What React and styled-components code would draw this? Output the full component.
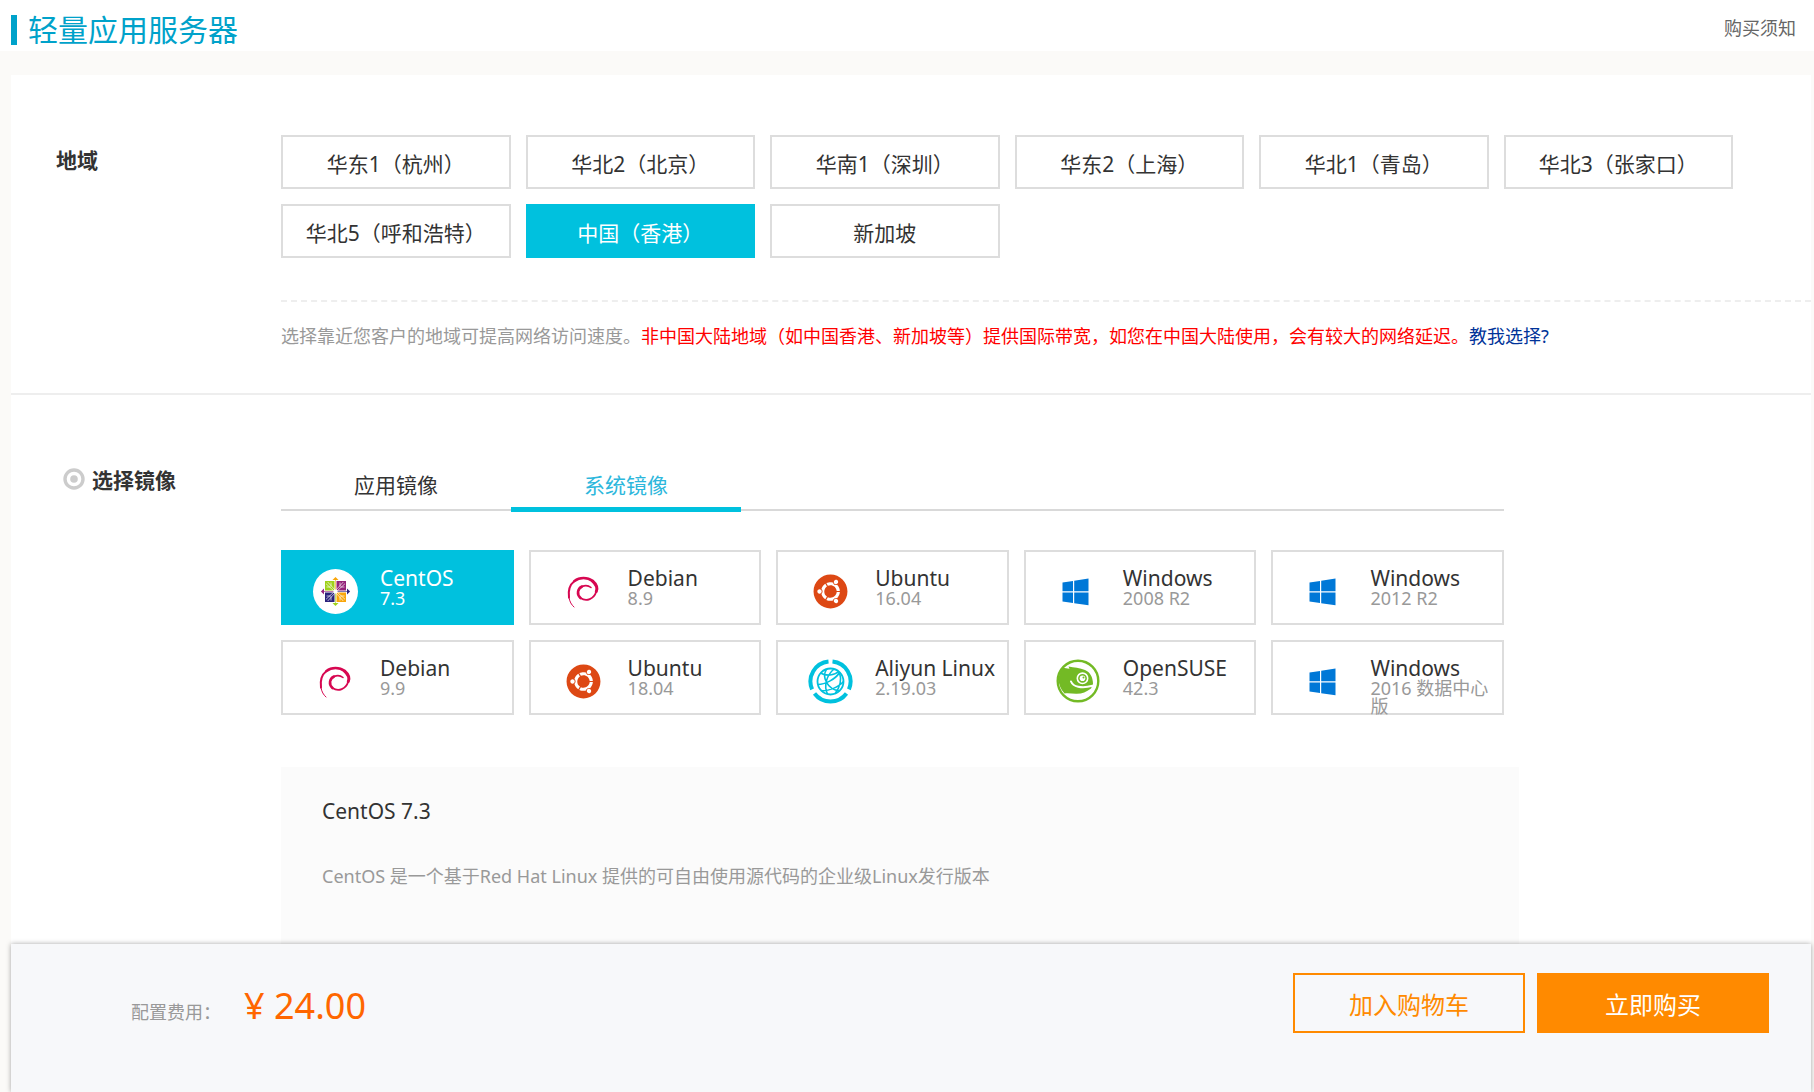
import React, { useState } from 'react';
import styled, { createGlobalStyle } from 'styled-components';
import { FaUbuntu } from 'react-icons/fa';

const GlobalStyle = createGlobalStyle`
    * {
        box-sizing: border-box;
    }
    body {
        margin: 0;
        background: #fbfaf8;
        color: #333;
        font-family: 'Noto Sans', 'Noto Sans CJK SC', sans-serif;
        font-size: 18px;
    }
    button {
        font-family: inherit;
        cursor: pointer;
    }
`;

const Page = styled.div`
    display: flex;
    flex-direction: column;
    min-height: 100vh;
`;
const Header = styled.header`
    display: flex;
    align-items: flex-start;
    justify-content: space-between;
    height: 51px;
    padding: 15px 18px 0 11px;
    background: #fff;
`;
const Title = styled.h1`
    margin: 0;
    padding-left: 11px;
    border-left: 6px solid #00a2ca;
    color: #00a2ca;
    font-size: 30px;
    font-weight: 400;
    line-height: 30px;
`;
const NoticeLink = styled.a`
    color: #666;
    line-height: 26px;
    text-decoration: none;
`;
const Main = styled.main`
    flex: 1;
    display: flex;
    flex-direction: column;
    margin: 24px 3px 0 11px;
    background: #fff;
`;
const Section = styled.section`
    display: flex;
    flex: ${(props) => (props.$grow ? 1 : 'none')};
    padding-top: 60px;
    border-bottom: ${(props) => (props.$grow ? 'none' : '2px solid #eee')};
`;
const Label = styled.h2`
    display: flex;
    align-items: center;
    gap: 7px;
    flex: none;
    width: 270px;
    height: 48px;
    margin: 0;
    padding-left: ${(props) => (props.$marked ? '52px' : '45px')};
    font-size: 21px;
    font-weight: 700;
`;
const Content = styled.div`
    flex: 1;
    min-width: 0;
    display: flex;
    flex-direction: column;
`;
const RegionGrid = styled.div`
    display: grid;
    grid-template-columns: repeat(6, 1fr);
    gap: 15px;
    padding-right: 78px;
`;
const RegionButton = styled.button`
    height: 54px;
    padding: 2px 0 0;
    border: 2px solid ${(props) => (props.$active ? '#00c1de' : '#ddd')};
    background: ${(props) => (props.$active ? '#00c1de' : '#fff')};
    color: ${(props) => (props.$active ? '#fff' : '#333')};
    font-size: 21px;
    white-space: nowrap;
`;
const Tip = styled.p`
    margin: 42px 0 0;
    padding: 20px 0 43px;
    border-top: 2px dashed #eee;
    color: #999;
    line-height: 28px;
`;
const Warning = styled.span`
    color: #f00;
`;
const TipLink = styled.a`
    color: #039;
    text-decoration: none;
`;
const Images = styled.div`
    padding-right: 307px;
`;
const Tabs = styled.div`
    display: flex;
    height: 56px;
    border-bottom: 2px solid #d9d9d9;
`;
const Tab = styled.button`
    width: 230px;
    height: 57px;
    padding: 6px 0 0;
    border: 0;
    border-bottom: 5px solid ${(props) => (props.$active ? '#00c1de' : 'transparent')};
    background: none;
    color: ${(props) => (props.$active ? '#2db7dc' : '#333')};
    font-size: 21px;
`;
const ImageGrid = styled.div`
    display: grid;
    grid-template-columns: repeat(5, 1fr);
    gap: 15px;
    margin-top: 39px;
`;
const ImageCard = styled.button`
    display: flex;
    align-items: flex-start;
    gap: 22px;
    height: 75px;
    padding: 16px 0 0 30px;
    border: 2px solid ${(props) => (props.$active ? '#00c1de' : '#ddd')};
    background: ${(props) => (props.$active ? '#00c1de' : '#fff')};
    color: ${(props) => (props.$active ? '#fff' : '#333')};
    text-align: left;
`;
const Logo = styled.span`
    display: flex;
    align-items: center;
    justify-content: center;
    flex: none;
    width: 45px;
    height: 45px;
    margin-top: 1px;
    border-radius: 50%;
    background: #fff;
`;
const ImageText = styled.span`
    min-width: 0;
`;
const ImageName = styled.span`
    display: block;
    font-size: 21px;
    line-height: 21px;
    white-space: nowrap;
`;
const ImageVersion = styled.span`
    display: block;
    color: ${(props) => (props.$active ? '#fff' : '#999')};
    font-size: 18px;
    line-height: 18px;
`;
const Detail = styled.div`
    flex: 1;
    margin: 52px 292px 0 0;
    padding: 30px 41px;
    background: #fbfbfb;
`;
const DetailTitle = styled.h3`
    margin: 0;
    font-size: 21px;
    font-weight: 400;
    line-height: 28px;
`;
const DetailText = styled.p`
    margin: 37px 0 0;
    color: #999;
    line-height: 28px;
`;
const Footer = styled.footer`
    position: sticky;
    bottom: 0;
    display: flex;
    justify-content: space-between;
    height: 148px;
    margin: 0 3px 0 11px;
    padding: 29px 42px 0 120px;
    background: #f7f8fa;
    box-shadow: 0 0 5px rgba(0, 0, 0, 0.35);
`;
const Cost = styled.div`
    display: flex;
    align-items: baseline;
    gap: 23px;
    padding-top: 8px;
    color: #999;
`;
const Price = styled.strong`
    color: #f60;
    font-size: 36px;
    font-weight: 400;
`;
const Actions = styled.div`
    display: flex;
    gap: 12px;
`;
const ActionButton = styled.button`
    width: 232px;
    height: 60px;
    border: 2px solid #ff8a00;
    background: ${(props) => (props.$primary ? '#ff8a00' : 'transparent')};
    color: ${(props) => (props.$primary ? '#fff' : '#ff8a00')};
    font-size: 24px;
`;

const TargetIcon = () => (
    <svg width="22" height="22" viewBox="0 0 22 22" aria-hidden="true">
        <circle cx="11" cy="11" r="9" fill="none" stroke="#ccc" strokeWidth="3.4" />
        <circle cx="11" cy="11" r="3.8" fill="#ccc" />
    </svg>
);

// one quarter of the CentOS mark, turned four times around the centre
const Quarter = ({ color, tip, angle }) => (
    <g transform={`rotate(${angle})`}>
        <rect x="-10.5" y="-10.5" width="9.5" height="9.5" fill={color} />
        <path d="M-3 -11.5 0 -14.6 3 -11.5Z" fill={tip} />
        <path d="M0 -12V0" stroke={tip} strokeOpacity="0.6" strokeWidth="1" />
        <path
            d="M-9.5 -7.8 -1 0M-7.8 -9.5 0 -1M-9 -4.5H-5M-4.5 -9V-5"
            stroke="#fff"
            strokeOpacity="0.65"
            strokeWidth="1"
        />
    </g>
);

const CentosLogo = () => (
    <svg width="45" height="45" viewBox="-22.5 -22.5 45 45">
        <Quarter color="#9fd11a" tip="#f9a60a" angle={0} />
        <Quarter color="#93237b" tip="#2b237c" angle={90} />
        <Quarter color="#f9a60a" tip="#9fd11a" angle={180} />
        <Quarter color="#2b237c" tip="#93237b" angle={270} />
        <circle r="2" fill="#fff" />
    </svg>
);

const DebianLogo = () => (
    <svg width="45" height="45" viewBox="-22.5 -22.5 45 45" fill="none" stroke="#d70751" strokeLinecap="round">
        <path strokeWidth="1" d="M-9.5 15.500C-12 13.500 -14 10 -14.500 6" />
        <path strokeWidth="2" d="M-14.500 6C-15.500 -1 -13.500 -7 -9 -10.500" />
        <path strokeWidth="2.6" d="M-9 -10.500C-4 -14.500 4 -14.500 9 -10.500" />
        <path strokeWidth="3" d="M9 -10.500C13 -7 14 -3 12.800 0" />
        <path strokeWidth="1.800" d="M12.800 0C10.500 7.500 3 10.500 -3 6.500" />
        <path strokeWidth="2.600" d="M-3 6.500C-7 3 -6 -3 -1.500 -5" />
        <path strokeWidth="1.500" d="M-1.500 -5C2 -6.500 5 -6 7.500 -4" />
    </svg>
);

const WindowsLogo = () => (
    <svg width="45" height="45" viewBox="0 0 45 45" fill="#0078d7">
        <path d="M6.500 13.500 17 12V22.300H6.500ZM18.200 11.800 32.500 9.500V22.300H18.200ZM6.500 23.500H17V34L6.500 32.500ZM18.200 23.500H32.500V36.300L18.200 34.200Z" />
    </svg>
);

const AliyunLogo = () => (
    <svg width="45" height="45" viewBox="-22.5 -22.5 45 45" fill="none" stroke="#00c1de">
        <path
            strokeWidth="4"
            d="M2 -19.9A20 20 0 0 1 18.4 7.9M16 12A20 20 0 0 1 -16 12M-18.4 7.9A20 20 0 0 1 -2 -19.9"
        />
        <circle r="13" strokeWidth="1.8" />
        <path
            strokeWidth="1.6"
            d="M-4 -12.400C-9 -4 -3 8 9 9.500M3.500 -12.500C-4 -6 -7 4 -3 12.600M-12.500 3C-6 3 5 -2 9 -9M-10 -8.500C-4 -5 4 -6 8 -10M9 -9C11 -3 10 5 4.500 12.200M-9 9C-3 10 8 6 13 0"
        />
    </svg>
);

const SuseLogo = () => (
    <svg width="45" height="45" viewBox="0 0 45 45">
        <circle cx="22" cy="22" r="20.3" fill="#fff" stroke="#73ba25" strokeWidth="2.4" />
        <path
            fill="#73ba25"
            d="M7 8.500C9 9 11 9.600 13.500 9.800L12.500 7.500C18 8.500 24 8.800 29 11 34 13 37 18 37 25L35 29.500C30 33 26 35 20 34.800 16 34.600 12 34 8.500 34.500 1 26 1 16 7 8.500Z"
        />
        <path
            fill="none"
            stroke="#fff"
            strokeWidth="2"
            strokeLinecap="round"
            d="M15 22.500C17 27.500 25 30 36.500 26.800"
        />
        <circle cx="26.500" cy="19.300" r="5.200" fill="#73ba25" stroke="#fff" strokeWidth="1.600" />
        <circle cx="26.500" cy="19.300" r="2.800" fill="#fff" />
        <circle cx="27.500" cy="18.400" r="1" fill="#73ba25" />
    </svg>
);

const logos = {
    centos: <CentosLogo />,
    debian: <DebianLogo />,
    ubuntu: <FaUbuntu size={35} color="#dd4814" />,
    windows: <WindowsLogo />,
    aliyun: <AliyunLogo />,
    suse: <SuseLogo />
};

const regions = [
    '华东1（杭州）',
    '华北2（北京）',
    '华南1（深圳）',
    '华东2（上海）',
    '华北1（青岛）',
    '华北3（张家口）',
    '华北5（呼和浩特）',
    '中国（香港）',
    '新加坡'
];

const images = [
    { logo: 'centos', name: 'CentOS', version: '7.3' },
    { logo: 'debian', name: 'Debian', version: '8.9' },
    { logo: 'ubuntu', name: 'Ubuntu', version: '16.04' },
    { logo: 'windows', name: 'Windows', version: '2008 R2' },
    { logo: 'windows', name: 'Windows', version: '2012 R2' },
    { logo: 'debian', name: 'Debian', version: '9.9' },
    { logo: 'ubuntu', name: 'Ubuntu', version: '18.04' },
    { logo: 'aliyun', name: 'Aliyun Linux', version: '2.19.03' },
    { logo: 'suse', name: 'OpenSUSE', version: '42.3' },
    { logo: 'windows', name: 'Windows', version: '2016 数据中心版' }
];

const tabs = ['应用镜像', '系统镜像'];

const App = () => {
    const [region, setRegion] = useState(7);
    const [tab, setTab] = useState(1);
    const [image, setImage] = useState(0);

    return (
        <Page>
            <GlobalStyle />
            <Header>
                <Title>轻量应用服务器</Title>
                <NoticeLink href="#notice">购买须知</NoticeLink>
            </Header>
            <Main>
                <Section>
                    <Label>地域</Label>
                    <Content>
                        <RegionGrid>
                            {regions.map((name, i) => (
                                <RegionButton key={name} $active={i === region} onClick={() => setRegion(i)}>
                                    {name}
                                </RegionButton>
                            ))}
                        </RegionGrid>
                        <Tip>
                            选择靠近您客户的地域可提高网络访问速度。
                            <Warning>
                                非中国大陆地域（如中国香港、新加坡等）提供国际带宽，如您在中国大陆使用，会有较大的网络延迟。
                            </Warning>
                            <TipLink href="#help">教我选择?</TipLink>
                        </Tip>
                    </Content>
                </Section>
                <Section $grow>
                    <Label $marked>
                        <TargetIcon />
                        选择镜像
                    </Label>
                    <Content>
                        <Images>
                            <Tabs>
                                {tabs.map((name, i) => (
                                    <Tab key={name} $active={i === tab} onClick={() => setTab(i)}>
                                        {name}
                                    </Tab>
                                ))}
                            </Tabs>
                            <ImageGrid>
                                {images.map((item, i) => (
                                    <ImageCard
                                        key={item.name + item.version}
                                        $active={i === image}
                                        onClick={() => setImage(i)}>
                                        <Logo>{logos[item.logo]}</Logo>
                                        <ImageText>
                                            <ImageName>{item.name}</ImageName>
                                            <ImageVersion $active={i === image}>{item.version}</ImageVersion>
                                        </ImageText>
                                    </ImageCard>
                                ))}
                            </ImageGrid>
                        </Images>
                        <Detail>
                            <DetailTitle>CentOS 7.3</DetailTitle>
                            <DetailText>
                                CentOS 是一个基于Red Hat Linux 提供的可自由使用源代码的企业级Linux发行版本
                            </DetailText>
                        </Detail>
                    </Content>
                </Section>
            </Main>
            <Footer>
                <Cost>
                    <span>配置费用：</span>
                    <Price>¥ 24.00</Price>
                </Cost>
                <Actions>
                    <ActionButton>加入购物车</ActionButton>
                    <ActionButton $primary>立即购买</ActionButton>
                </Actions>
            </Footer>
        </Page>
    );
};

export default App;
